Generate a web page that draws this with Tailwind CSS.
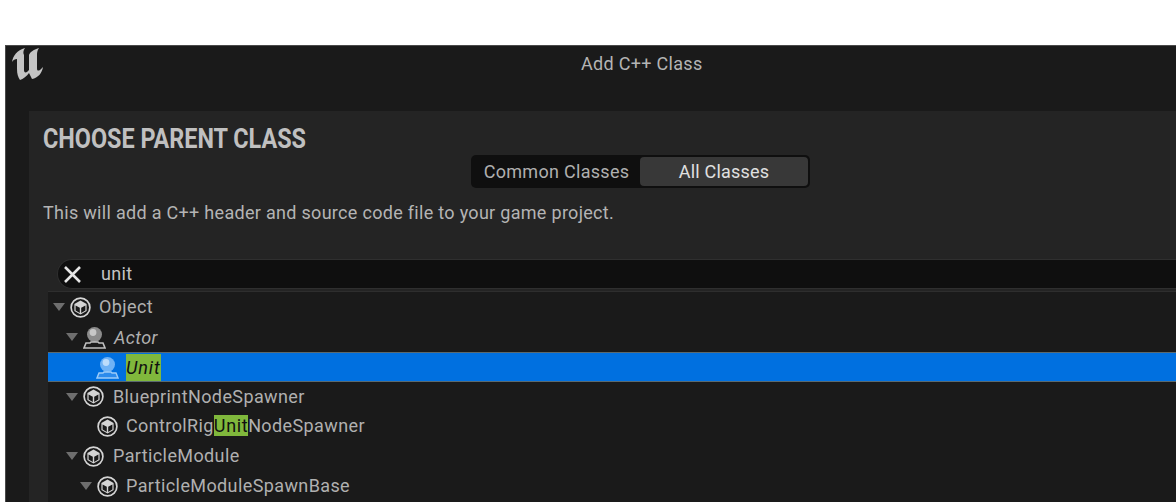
<!DOCTYPE html>
<html lang="en">
<head>
    <meta charset="UTF-8">
    <title>Add C++ Class</title>
    <script src="https://cdn.jsdelivr.net/npm/@tailwindcss/browser@4"></script>
</head>
<body class="bg-white h-[502px] w-[1176px] overflow-hidden font-['Roboto',sans-serif]">
    <svg width="0" height="0" class="absolute">
        <defs>
            <symbol id="cube" viewBox="0 0 21 21">
                <circle cx="10.5" cy="10.5" r="9.4" fill="none" stroke="#d4d4d4" stroke-width="1.7"/>
                <path d="M10.5 3.4 16.6 6.9 16.6 14.1 10.5 17.6 4.4 14.1 4.4 6.9Z" fill="#d4d4d4"/>
                <path d="M5.6 8.4 9.8 10.8 9.8 16 5.6 13.5Z M15.4 8.4 11.2 10.8 11.2 16 15.4 13.5Z" fill="#1a1a1a"/>
            </symbol>
        </defs>
    </svg>

    <div class="ml-[5px] mt-[45px] h-[457px] border-l border-t border-[#4a4a4a] bg-[#1a1a1a] flex flex-col">
        <!-- title bar -->
        <div class="h-[65px] shrink-0 relative">
            <svg class="absolute left-[6px] top-[1px]" width="32" height="33" viewBox="0 0 32 33">
                <path fill="#c4c4c4" d="M0 15C1 9 5 3 13 1 11 4 11 6 12 8L12 23C12 25 13 26 15 25L17 23 17 8C18 5 21 3 27 1 25 4 25 6 25 8L25 21C25 24 26 24 28 23L31 20C30 26 26 31 20 32 19 30 18 28 17 26 15 29 11 32 8 33 6 30 5 27 5 22L5 12C3 12 1 13 0 15Z"/>
            </svg>
            <div class="absolute left-[575px] top-[7px] text-[18px] leading-[22px] tracking-[0.3px] text-[#b4b4b4]">Add C++ Class</div>
        </div>

        <!-- panel -->
        <div class="ml-[23px] grow bg-[#242424] flex flex-col overflow-hidden">
            <div class="h-[148px] shrink-0 relative pl-[14px]">
                <h1 class="pt-[11px] text-[27px] leading-[34px] font-bold text-[#c0c0c0] origin-left scale-x-[0.866] whitespace-nowrap">CHOOSE PARENT CLASS</h1>
                <div class="absolute left-[442px] top-[44px] w-[339px] h-[33px] bg-[#0f0f0f] rounded-[5px] flex items-center p-[2px]">
                    <div class="w-[167px] text-center text-[18px] tracking-[0.3px] text-[#b0b0b0]">Common Classes</div>
                    <div class="grow h-full rounded-[4px] bg-[#383838] flex items-center justify-center text-[18px] tracking-[0.2px] text-[#e0e0e0]">All Classes</div>
                </div>
                <p class="mt-[46px] text-[18px] leading-[22px] tracking-[0.3px] text-[#b4b4b4] whitespace-nowrap">This will add a C++ header and source code file to your game project.</p>
            </div>

            <!-- search -->
            <div class="ml-[28px] h-[30px] shrink-0 bg-[#0f0f0f] border border-[#2f2f2f] border-r-0 rounded-l-[15px] flex items-center">
                <svg class="ml-[5px]" width="19" height="19" viewBox="0 0 19 19"><path d="M2 2 17 17M17 2 2 17" stroke="#e6e6e6" stroke-width="2.6"/></svg>
                <span class="ml-[19px] pb-[2px] text-[18px] tracking-[0.3px] text-[#c4c4c4]">unit</span>
            </div>

            <!-- tree -->
            <div class="ml-[19px] mt-[2px] grow bg-[#1a1a1a] text-[18px] tracking-[0.39px] text-[#b0b0b0] border-t border-[#2e2e2e]">
                <div class="h-[30px] flex items-center pl-[5px]">
                    <span class="w-0 h-0 border-l-[6px] border-r-[6px] border-t-[8px] border-x-transparent border-t-[#6e6e6e]"></span>
                    <svg class="ml-[5px] w-[21px] h-[21px]"><use href="#cube"/></svg>
                    <span class="ml-[8px] pb-[1px]">Object</span>
                </div>
                <div class="h-[30px] flex items-center pl-[18px]">
                    <span class="w-0 h-0 border-l-[6px] border-r-[6px] border-t-[8px] border-x-transparent border-t-[#6e6e6e]"></span>
                    <svg class="ml-[5px]" width="23" height="23" viewBox="0 0 23 23">
                        <circle cx="11.5" cy="8.5" r="7.5" fill="#8c8c8c"/><circle cx="10" cy="6.5" r="3.4" fill="#c8c8c8"/>
                        <path d="M3 17H7L8 16H15L16 17H20L22 22H1Z" fill="none" stroke="#c0c0c0" stroke-width="1.6"/>
                    </svg>
                    <span class="ml-[8px] italic">Actor</span>
                </div>
                <div class="h-[30px] flex items-center pl-[48px] bg-[#0070e0] border-y border-[#5a6a70]">
                    <svg width="23" height="23" viewBox="0 0 23 23">
                        <circle cx="11.5" cy="8.5" r="7.5" fill="#6fb2f5"/><circle cx="10" cy="6.5" r="3.4" fill="#bcdcfb"/>
                        <path d="M3 17H7L8 16H15L16 17H20L22 22H1Z" fill="#2c8bec" stroke="#9ccbf8" stroke-width="1.4"/>
                    </svg>
                    <span class="ml-[7px] italic bg-[#80b83c] text-[#101010] tracking-[0.9px]">Unit</span>
                </div>
                <div class="h-[29px] flex items-center pl-[18px]">
                    <span class="w-0 h-0 border-l-[6px] border-r-[6px] border-t-[8px] border-x-transparent border-t-[#6e6e6e]"></span>
                    <svg class="ml-[5px] w-[21px] h-[21px]"><use href="#cube"/></svg>
                    <span class="ml-[9px]">BlueprintNodeSpawner</span>
                </div>
                <div class="h-[30px] flex items-center pl-[49px]">
                    <svg class="w-[21px] h-[21px]"><use href="#cube"/></svg>
                    <span class="ml-[8px] pb-[1px]">ControlRig<span class="bg-[#80b83c] text-[#101010] tracking-[0.6px]">Unit</span>NodeSpawner</span>
                </div>
                <div class="h-[30px] flex items-center pl-[18px]">
                    <span class="w-0 h-0 border-l-[6px] border-r-[6px] border-t-[8px] border-x-transparent border-t-[#6e6e6e]"></span>
                    <svg class="ml-[5px] w-[21px] h-[21px]"><use href="#cube"/></svg>
                    <span class="ml-[9px] pb-[1px]">ParticleModule</span>
                </div>
                <div class="h-[30px] flex items-center pl-[32px]">
                    <span class="w-0 h-0 border-l-[6px] border-r-[6px] border-t-[8px] border-x-transparent border-t-[#6e6e6e]"></span>
                    <svg class="ml-[5px] w-[21px] h-[21px]"><use href="#cube"/></svg>
                    <span class="ml-[8px] pb-[1px]">ParticleModuleSpawnBase</span>
                </div>
            </div>
        </div>
    </div>
</body>
</html>
